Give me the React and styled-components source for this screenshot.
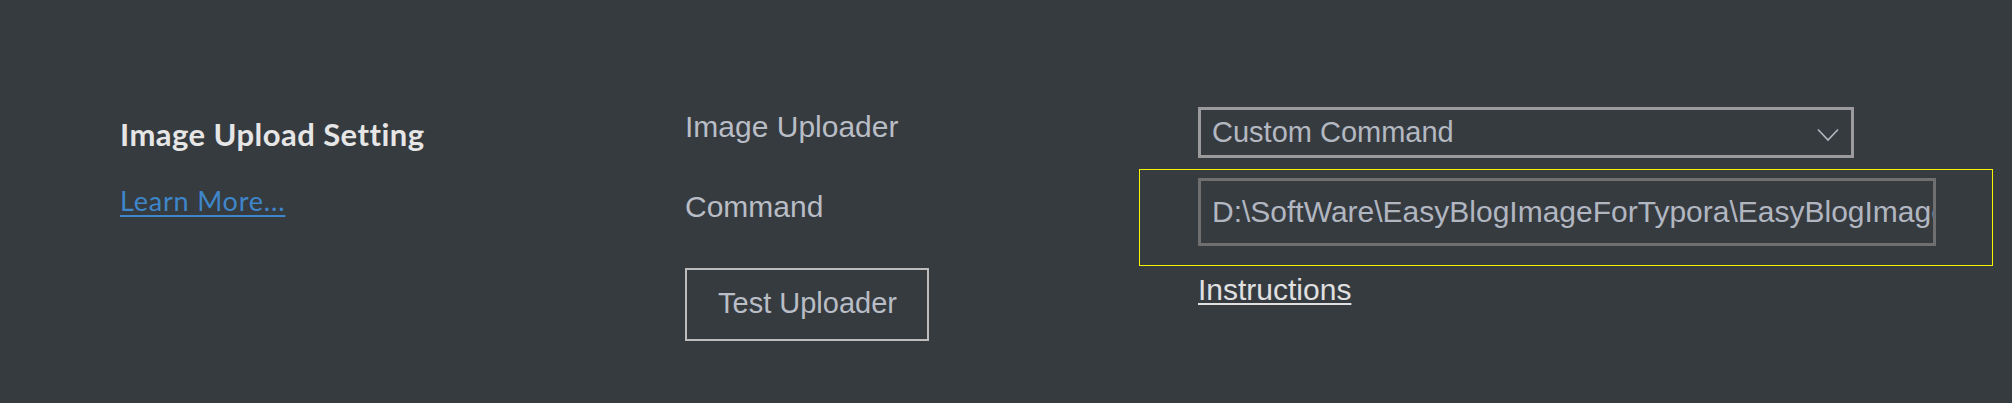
import React from 'react';
import styled, { createGlobalStyle } from 'styled-components';

const GlobalStyle = createGlobalStyle`
  html, body {
    margin: 0;
    padding: 0;
    background: #363b40;
    height: 403px;
    overflow: hidden;
  }
  #root {
    height: 100%;
  }
`;

const Page = styled.div`
  display: grid;
  grid-template-columns: 565px 454px 854px;
  align-items: start;
  padding: 107px 0 0 120px;
  height: 100%;
  box-sizing: border-box;
  background: #363b40;
`;

const InfoColumn = styled.div`
  display: flex;
  flex-direction: column;
  align-items: flex-start;
  gap: 33px;
  margin-top: 9px;
  font-family: 'Segoe UI', Lato, 'Open Sans', sans-serif;
`;

const SectionTitle = styled.h2`
  margin: 0;
  font-size: 31px;
  line-height: 36px;
  font-weight: 700;
  letter-spacing: 0.45px;
  color: #e6e6e6;
`;

const LearnMore = styled.a`
  font-size: 27px;
  line-height: 32px;
  letter-spacing: 0.8px;
  color: #3e86c9;
  text-decoration: underline;
  text-underline-offset: 4px;
  text-decoration-thickness: 2px;
  cursor: pointer;
`;

const LabelColumn = styled.div`
  display: flex;
  flex-direction: column;
  align-items: flex-start;
  gap: 44px;
  margin-top: 2px;
  font-family: 'Liberation Sans', Arial, sans-serif;
`;

const Label = styled.div`
  font-size: 30px;
  line-height: 36px;
  color: #b9bdc5;
`;

const OutlineButton = styled.button`
  margin-top: -1px;
  background: transparent;
  border: 2px solid #bdbdbd;
  padding: 17px 30px 20px 31px;
  font-family: 'Liberation Sans', Arial, sans-serif;
  font-size: 29px;
  line-height: 32px;
  color: #b9bdc5;
  cursor: pointer;
`;

const ControlColumn = styled.div`
  display: flex;
  flex-direction: column;
  align-items: stretch;
  font-family: 'Liberation Sans', Arial, sans-serif;
`;

const ControlRow = styled.div`
  display: flex;
  padding-left: 59px;
  margin-bottom: ${p => p.$gap || 0}px;
  ${p =>
    p.$focused &&
    `
    border: 1px solid #f4f400;
    padding: 8px 0 19px 58px;
  `}
`;

const Select = styled.div`
  width: 656px;
  height: 51px;
  box-sizing: border-box;
  border: 3px solid #9b9a9c;
  display: flex;
  align-items: center;
  justify-content: space-between;
  padding: 0 12px 0 11px;
  font-size: 29px;
  color: #b4b8c0;
`;

const Chevron = styled.svg`
  width: 22px;
  height: 14px;
  margin-top: 4px;
`;

const TextInput = styled.div`
  width: 738px;
  height: 68px;
  box-sizing: border-box;
  border: 3px solid #6f6f70;
  padding: 0 3px 0 11px;
  font-size: 30px;
  line-height: 62px;
  color: #b1b6c0;
  white-space: nowrap;
  overflow: hidden;
`;

const Instructions = styled.a`
  margin-top: 6px;
  margin-left: 59px;
  align-self: flex-start;
  font-size: 30px;
  line-height: 36px;
  color: #e0e0e0;
  text-decoration: underline;
  text-underline-offset: 3px;
  text-decoration-thickness: 2px;
  cursor: pointer;
`;

const App = () => {
  return (
    <>
      <GlobalStyle />
      <Page>
        <InfoColumn>
          <SectionTitle>Image Upload Setting</SectionTitle>
          <LearnMore>Learn More...</LearnMore>
        </InfoColumn>

        <LabelColumn>
          <Label>Image Uploader</Label>
          <Label>Command</Label>
          <OutlineButton>Test Uploader</OutlineButton>
        </LabelColumn>

        <ControlColumn>
          <ControlRow $gap={11}>
            <Select>
              <span>Custom Command</span>
              <Chevron viewBox="0 0 22 14">
                <path
                  d="M1 1.5 L11 12 L21 1.5"
                  fill="none"
                  stroke="#b4b8c0"
                  strokeWidth="1.6"
                />
              </Chevron>
            </Select>
          </ControlRow>
          <ControlRow $focused>
            <TextInput>
              D:\SoftWare\EasyBlogImageForTypora\EasyBlogImageForTypora.exe
            </TextInput>
          </ControlRow>
          <Instructions>Instructions</Instructions>
        </ControlColumn>
      </Page>
    </>
  );
};

export default App;
